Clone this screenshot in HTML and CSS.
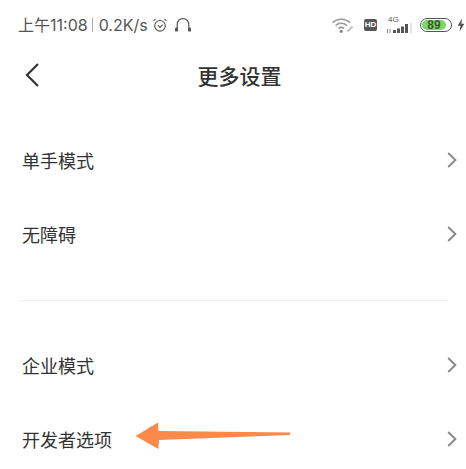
FILE: index.html
```html
<!DOCTYPE html>
<html lang="zh-CN">
<head>
    <meta charset="UTF-8">
    <meta name="viewport" content="width=device-width, initial-scale=1.0">
    <title>更多设置</title>
    <link rel="stylesheet" href="styles.css">
</head>
<body>
    <div class="status-bar">
        <div class="status-left">
            <span class="clock">上午11:08</span>
            <span class="status-sep"></span>
            <span class="speed">0.2K/s</span>
            <svg class="alarm-icon" width="16" height="16" viewBox="0 0 16 16" fill="none" stroke="#555" stroke-width="1.1">
                <circle cx="8" cy="8.8" r="5.3"/>
                <path d="M5.8 8.2 L8 10.4 L10.6 7.6"/>
                <path d="M1.4 3.8 L3.6 1.9 M14.6 3.8 L12.4 1.9"/>
            </svg>
            <svg class="headset-icon" width="18" height="16" viewBox="0 0 18 16" fill="none" stroke="#555" stroke-width="1.2">
                <path d="M3.2 13 V7.6 C3.2 4 5.6 1.6 9 1.6 C12.4 1.6 14.8 4 14.8 7.6 V13"/>
                <rect x="1" y="10.6" width="3" height="4" rx="1.2" fill="#555" stroke="none"/>
                <rect x="14" y="10.6" width="3" height="4" rx="1.2" fill="#555" stroke="none"/>
            </svg>
        </div>
        <div class="status-right">
            <svg class="wifi-icon" width="24" height="17" viewBox="0 0 24 16" fill="none" stroke="#999" stroke-width="1.7">
                <path d="M1.5 5.2 C6.5 0.6 14 0.6 19 5.2"/>
                <path d="M4.6 8.2 C8 5.2 12.6 5.2 16 8.2"/>
                <path d="M7.6 11 C9.2 9.6 11.4 9.6 13 11"/>
                <circle cx="10.2" cy="13.8" r="1.6" fill="#888" stroke="none"/>
                <path d="M16.4 14 L21.4 9" stroke-width="2.4" stroke="#c4c4c4"/>
            </svg>
            <span class="hd-badge">HD</span>
            <div class="signal">
                <span class="signal-label">4G</span>
                <svg width="25" height="11" viewBox="0 0 25 11" fill="#555">
                    <rect x="0" y="6" width="1" height="4" fill="#888"/>
                    <rect x="2.5" y="6" width="1" height="4" fill="#888"/>
                    <rect x="6" y="7" width="3" height="3"/>
                    <rect x="10" y="5.5" width="3" height="4.5"/>
                    <rect x="14" y="3.5" width="3" height="6.5"/>
                    <rect x="18" y="1" width="3" height="9"/>
                    <rect x="23.5" y="0" width="1" height="10" fill="#ccc"/>
                </svg>
            </div>
            <div class="battery"><span class="battery-level">89</span></div>
            <svg class="bolt-icon" width="8" height="14" viewBox="0 0 8 13" fill="#555">
                <path d="M5 0 L0.6 7.2 H3.4 L2.6 13 L7.4 5.2 H4.4 Z"/>
            </svg>
        </div>
    </div>

    <div class="title-bar">
        <svg class="back-icon" width="16" height="26" viewBox="0 0 16 26" fill="none" stroke="#333" stroke-width="2.2">
            <path d="M14 2 L3 13 L14 24"/>
        </svg>
        <h1 class="page-title">更多设置</h1>
    </div>

    <div class="settings-group">
        <div class="settings-row">
            <span>单手模式</span>
            <svg class="chevron" width="10" height="16" viewBox="0 0 10 16" fill="none" stroke="#888" stroke-width="1.9"><path d="M1.2 1 L8.4 8 L1.2 15"/></svg>
        </div>
        <div class="settings-row">
            <span>无障碍</span>
            <svg class="chevron" width="10" height="16" viewBox="0 0 10 16" fill="none" stroke="#888" stroke-width="1.9"><path d="M1.2 1 L8.4 8 L1.2 15"/></svg>
        </div>
    </div>

    <div class="divider"></div>

    <div class="settings-group">
        <div class="settings-row">
            <span>企业模式</span>
            <svg class="chevron" width="10" height="16" viewBox="0 0 10 16" fill="none" stroke="#888" stroke-width="1.9"><path d="M1.2 1 L8.4 8 L1.2 15"/></svg>
        </div>
        <div class="settings-row">
            <span>开发者选项</span>
            <svg class="chevron" width="10" height="16" viewBox="0 0 10 16" fill="none" stroke="#888" stroke-width="1.9"><path d="M1.2 1 L8.4 8 L1.2 15"/></svg>
        </div>
    </div>

    <svg class="arrow" width="156" height="28" viewBox="0 0 156 28" fill="#fb8a4a">
        <path d="M0.5 14 L23 0.5 L23.5 9 L155 10.5 Q156 12.5 154.5 13 L24 18 L23.5 27 Z"/>
    </svg>
</body>
</html>
```

FILE: styles.css
```css
body {
    margin: 0;
    width: 466px;
    height: 469px;
    overflow: hidden;
    position: relative;
    background-color: #fff;
    font-family: "Noto Sans CJK SC", "Noto Sans", sans-serif;
    color: #333;
}

.status-bar {
    display: flex;
    justify-content: space-between;
    align-items: center;
    height: 24px;
    padding: 13px 1px 0 18px;
    color: #555;
}

.status-left {
    display: flex;
    align-items: center;
}

.clock,
.speed {
    font-family: Inter, "Noto Sans CJK SC", sans-serif;
    font-size: 16px;
    line-height: 20px;
}

.status-sep {
    width: 1px;
    height: 14px;
    margin: 0 6px 0 4px;
    background-color: #aaa;
}

.alarm-icon {
    margin-left: 4px;
}

.headset-icon {
    margin-left: 6px;
}

.status-right {
    display: flex;
    align-items: center;
}

.hd-badge {
    width: 13px;
    height: 12px;
    margin-left: 9px;
    border-radius: 2px;
    background-color: #555;
    color: #fff;
    font-family: "Liberation Sans", sans-serif;
    font-size: 8px;
    font-weight: bold;
    line-height: 12px;
    text-align: center;
}

.signal {
    display: flex;
    flex-direction: column;
    margin-left: 10px;
    width: 25px;
}

.signal-label {
    margin-left: 1px;
    font-family: "Liberation Sans", sans-serif;
    font-size: 8px;
    line-height: 7px;
}

.battery {
    display: flex;
    width: 28px;
    height: 10px;
    margin-left: 8px;
    padding: 1px;
    border: 1px solid #555;
    border-radius: 7px;
}

.battery-level {
    width: 24px;
    border-radius: 5px;
    background-color: #7ed56a;
    font-family: "Liberation Sans", sans-serif;
    font-size: 12px;
    font-weight: bold;
    line-height: 11px;
    text-align: center;
    color: #3d5a34;
}

.bolt-icon {
    margin-left: 5px;
}

.title-bar {
    display: flex;
    align-items: center;
    height: 40px;
    margin-top: 18px;
    padding-left: 24px;
}

.page-title {
    flex: 1;
    margin: 0 0 0 -27px;
    font-size: 21px;
    font-weight: 500;
    line-height: 40px;
    text-align: center;
    color: #333;
}

.settings-group {
    display: flex;
    flex-direction: column;
}

.title-bar + .settings-group {
    margin-top: 28px;
}

.settings-row {
    display: flex;
    justify-content: space-between;
    align-items: center;
    height: 74px;
    padding: 0 9px 0 22px;
    font-size: 18px;
    color: #333;
}

.divider {
    height: 1px;
    margin: 29px 20px 27px;
    background-color: #eee;
}

/* annotation drawn on top of the screenshot */
.arrow {
    position: absolute;
    left: 135px;
    top: 422px;
}
```
